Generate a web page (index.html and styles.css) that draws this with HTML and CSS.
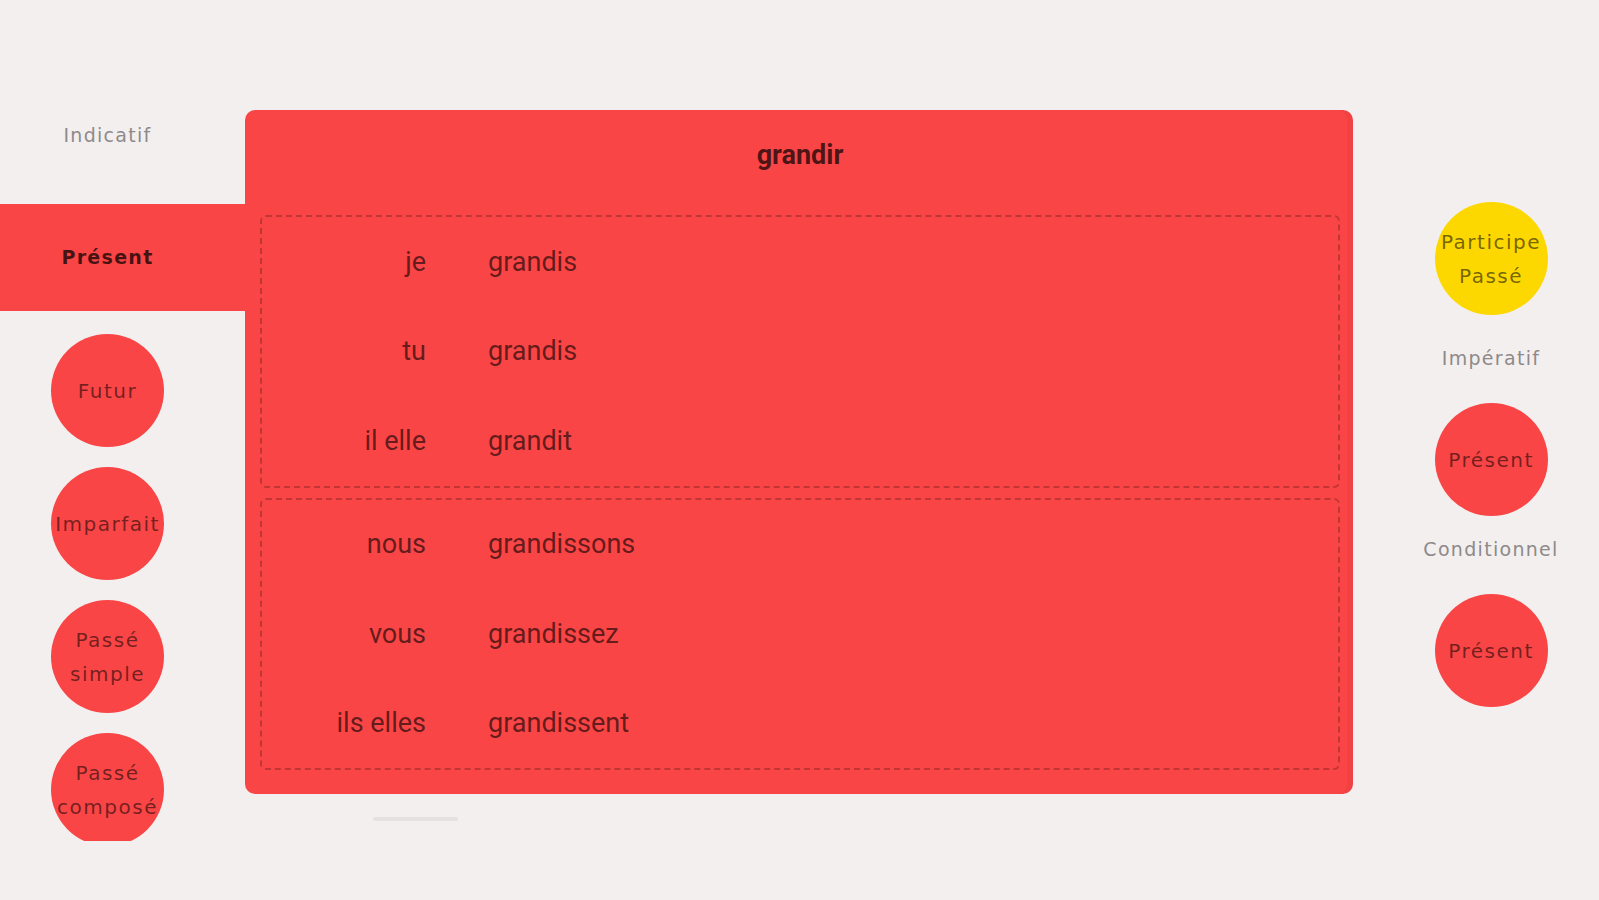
FILE: index.html
```html
<!DOCTYPE html>
<html lang="fr">
<head>
<meta charset="utf-8">
<title>grandir</title>
<link rel="stylesheet" href="styles.css">
</head>
<body>
<div class="page">
  <aside class="col-left">
    <div class="group-label">Indicatif</div>
    <div class="band">Présent</div>
    <div class="circles">
      <div class="circle">Futur</div>
      <div class="circle">Imparfait</div>
      <div class="circle">Passé<br>simple</div>
      <div class="circle">Passé<br>composé</div>
    </div>
  </aside>

  <main class="col-main">
    <section class="card">
      <h1 class="verb-title">grandir</h1>
      <div class="group">
        <div class="row"><span class="pron">je</span><span class="form">grandis</span></div>
        <div class="row"><span class="pron">tu</span><span class="form">grandis</span></div>
        <div class="row"><span class="pron">il elle</span><span class="form">grandit</span></div>
      </div>
      <div class="group">
        <div class="row"><span class="pron">nous</span><span class="form">grandissons</span></div>
        <div class="row"><span class="pron">vous</span><span class="form">grandissez</span></div>
        <div class="row"><span class="pron">ils elles</span><span class="form">grandissent</span></div>
      </div>
    </section>
    <div class="thumb"></div>
  </main>

  <aside class="col-right">
    <div class="circle yellow">Participe<br>Passé</div>
    <div class="group-label side">Impératif</div>
    <div class="circle">Présent</div>
    <div class="group-label side">Conditionnel</div>
    <div class="circle">Présent</div>
  </aside>
</div>
</body>
</html>
```

FILE: styles.css
```css
html, body {
  margin: 0;
  padding: 0;
  background: #f3efef;
  height: 100%;
}

body {
  font-family: "DejaVu Sans", sans-serif;
  overflow: hidden;
}

.page {
  display: flex;
  align-items: flex-start;
  width: 1599px;
  height: 900px;
}

/* left column */
.col-left {
  width: 245px;
  flex: none;
  height: 841px;
  overflow: hidden;
  display: flex;
  flex-direction: column;
  padding-top: 123px;
  box-sizing: border-box;
}

.group-label {
  font-size: 19px;
  line-height: 24px;
  letter-spacing: 1.3px;
  color: #8d8a8a;
  text-align: center;
  white-space: nowrap;
}

.col-left .group-label {
  padding-right: 30px;
}

.band {
  margin-top: 57px;
  height: 107px;
  line-height: 107px;
  background: #f94545;
  color: rgba(0, 0, 0, 0.72);
  font-weight: bold;
  font-size: 19px;
  letter-spacing: 1.3px;
  text-align: center;
  padding-right: 30px;
}

.circles {
  display: flex;
  flex-direction: column;
  align-items: center;
  gap: 20px;
  margin-top: 23px;
  padding-right: 30px;
}

.circle {
  width: 113px;
  height: 113px;
  flex: none;
  border-radius: 50%;
  background: #f94545;
  color: rgba(0, 0, 0, 0.55);
  font-size: 20px;
  letter-spacing: 1.5px;
  line-height: 34px;
  display: flex;
  align-items: center;
  justify-content: center;
  text-align: center;
  white-space: nowrap;
}

.circle.yellow {
  background: #fdd800;
  color: rgba(0, 0, 0, 0.55);
}

/* main */
.col-main {
  width: 1108px;
  flex: none;
  margin-top: 110px;
  display: flex;
  flex-direction: column;
}

.card {
  background: #f94545;
  border-radius: 10px;
  padding: 0 13px 24px 15px;
  box-shadow: inset -6px 0 0 rgba(0, 0, 0, 0.035);
  display: flex;
  flex-direction: column;
  gap: 10px;
}

.verb-title {
  margin: 0;
  height: 95px;
  line-height: 90px;
  text-align: center;
  font-family: Roboto, "Liberation Sans", sans-serif;
  font-weight: bold;
  font-size: 27px;
  color: rgba(0, 0, 0, 0.7);
}

.group {
  border: 2px dashed rgba(0, 0, 0, 0.22);
  border-radius: 6px;
  display: flex;
  flex-direction: column;
}

.row {
  height: 89.5px;
  display: flex;
  align-items: center;
  font-family: Roboto, "Liberation Sans", sans-serif;
  font-size: 27px;
  color: rgba(0, 0, 0, 0.62);
}

.pron {
  width: 164px;
  text-align: right;
  flex: none;
}

.form {
  margin-left: 62px;
}

.thumb {
  width: 85px;
  height: 4px;
  border-radius: 2px;
  background: #e5e1e1;
  margin-top: 23px;
  margin-left: 128px;
}

/* right column */
.col-right {
  width: 216px;
  flex: none;
  margin-left: 30px;
  padding-top: 202px;
  display: flex;
  flex-direction: column;
  align-items: center;
}

.group-label.side {
  margin-top: 31px;
  margin-bottom: 33px;
}

.group-label.side + .circle + .group-label.side {
  margin-top: 21px;
}
```
